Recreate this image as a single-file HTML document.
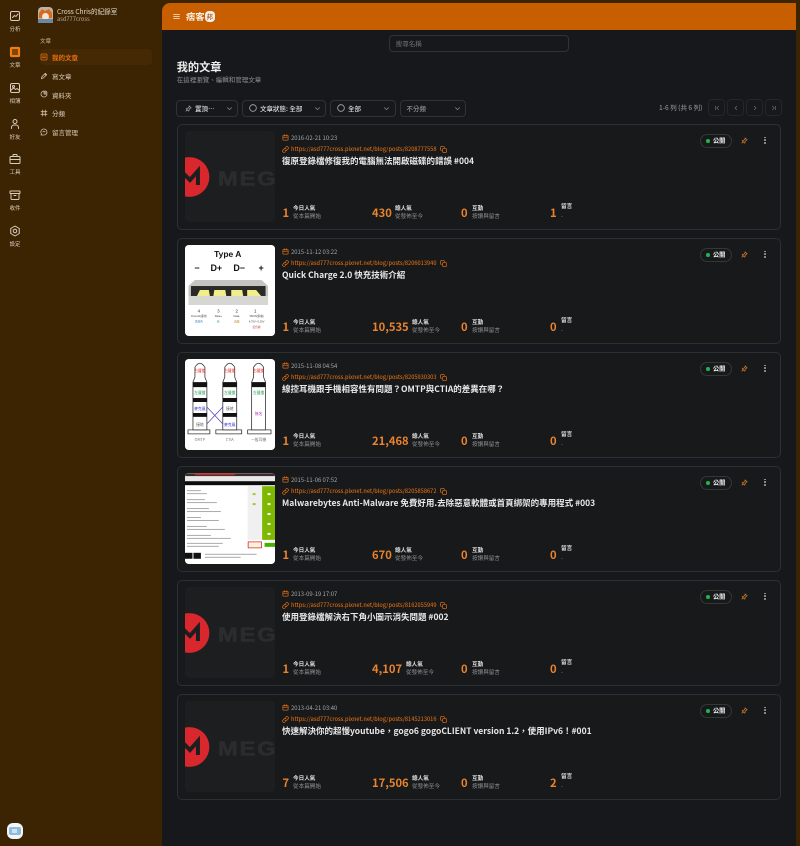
<!DOCTYPE html>
<html lang="zh-Hant"><head><meta charset="utf-8"><title>我的文章</title>
<style>
*{box-sizing:border-box;margin:0;padding:0}
html,body{width:800px;height:846px;overflow:hidden;background:#3c2403;font-family:"Noto Sans CJK TC","Liberation Sans",sans-serif;color:#e4e4e4}
.a{position:absolute;white-space:nowrap}
svg{display:block;fill:none;stroke:currentColor;stroke-linecap:round;stroke-linejoin:round}
.rail{position:absolute;left:0;width:30px;text-align:center;font-size:5.500px;line-height:8px;color:#d8cdbd}
.rail svg{width:12px;height:12px;margin:1px auto 3px}
.rail.on svg{color:#f07c14}
.nav{position:absolute;left:40px;width:112px;height:16px;font-size:6.500px;line-height:16px;color:#d9cdbc;padding-left:12px}
.nav svg{position:absolute;left:0;top:3.500px;width:8px;height:8px;color:#cdbfa9}
.nav.on{background:#452904;color:#e8700f;font-weight:700;border-radius:4px}
.nav.on svg{color:#e8700f}
#main{position:absolute;left:162px;top:3px;width:634px;height:843px;background:#16181b;border-radius:8px 0 0 0;overflow:hidden}
#hd{position:absolute;left:0;top:0;width:634px;height:27px;background:#c75f00}
.flt{position:absolute;top:96.500px;height:17px;border:1px solid #2f3337;border-radius:4px;font-size:6.500px;line-height:15px;font-weight:500;color:#dedede}
.flt span{position:absolute;white-space:nowrap}
.flt svg{position:absolute;top:4px;width:7px;height:7px;color:#8b8d8f}
.pg{position:absolute;top:96px;width:17px;height:17px;border:1px solid #24272a;border-radius:4px;color:#66696c}
.pg svg{width:6px;height:6px;margin:4.500px auto}
.card{position:absolute;left:15px;width:604px;height:106px;border:1px solid #2d3033;border-radius:5px;background:#17191b}
.im{position:absolute;left:6.500px;top:6px;width:90.500px;height:91px;border-radius:4px;overflow:hidden;background:#1c1e20}
.im svg{width:90.500px;height:91px;stroke:none}
.dt{position:absolute;left:104px;top:7px;font-size:5.900px;line-height:11px;color:#a5a6a7;padding-left:9px;white-space:nowrap}
.url{position:absolute;left:104px;top:18.500px;font-size:5.550px;line-height:11px;color:#d66a12;font-weight:500;padding-left:9px;white-space:nowrap}
.ic{position:absolute;left:0;top:2px;width:7px;height:7px;color:#d66a12}
.cp{position:absolute;left:262px;top:20.500px;width:7px;height:7px;color:#d66a12}
.tt{position:absolute;left:104px;top:29px;font-size:8.500px;line-height:15px;font-weight:700;color:#e8e8e8;white-space:nowrap}
.n{position:absolute;top:78.500px;font-size:11.200px;line-height:18px;font-weight:700;color:#e9832d;white-space:nowrap}
.l1{position:absolute;top:79px;font-size:5.600px;line-height:8px;font-weight:700;color:#e3e3e3;white-space:nowrap}
.l2{position:absolute;top:86.500px;font-size:5.600px;line-height:8px;color:#8f9092;white-space:nowrap}
.pub{position:absolute;left:522px;top:8.500px;width:32px;height:14.500px;border:1px solid #2e3a36;border-radius:8px;font-size:6.200px;line-height:12.500px;font-weight:700;color:#eee;padding-left:12px}
.pub i{position:absolute;left:5px;top:4.500px;width:3.500px;height:3.500px;border-radius:50%;background:#22b14c}
.pin{position:absolute;left:562.500px;top:12px;width:7px;height:7px;color:#d97a28}
.more{position:absolute;left:586px;top:11.500px;width:3px;height:9px}
.more b{display:block;width:1.800px;height:1.800px;background:#a0a0a0;border-radius:50%;margin:0 0 1.200px}
</style></head><body>
<svg width="0" height="0" style="position:absolute"><defs>
<symbol id="cal" viewBox="0 0 24 24"><rect x="3" y="5" width="18" height="16" rx="2" stroke-width="2.600"/><path d="M8 2v5M16 2v5M3 11h18" stroke-width="2.600"/></symbol>
<symbol id="lnk" viewBox="0 0 24 24"><path d="M10 14a5 5 0 0 0 7 0l4-4a5 5 0 0 0-7-7l-2 2M14 10a5 5 0 0 0-7 0l-4 4a5 5 0 0 0 7 7l2-2" stroke-width="2.600"/></symbol>
<symbol id="cpy" viewBox="0 0 24 24"><rect x="9" y="9" width="13" height="13" rx="2" stroke-width="2.600"/><path d="M5 15H4a2 2 0 0 1-2-2V4a2 2 0 0 1 2-2h9a2 2 0 0 1 2 2v1" stroke-width="2.600"/></symbol>
<symbol id="pin" viewBox="0 0 24 24"><path d="M14 3l7 7-3 1-4 4v4l-2 2-8-8 2-2h4l4-4zM8 16l-5 5" stroke-width="2.600"/></symbol>
<symbol id="chev" viewBox="0 0 24 24"><path d="M5 9l7 7 7-7" stroke-width="2.400"/></symbol>
<symbol id="mega" viewBox="0 0 91 91"><rect width="91" height="91" fill="#1c1e20"/><circle cx="4.500" cy="46" r="20" fill="#d9272e"/><path d="M-4 54V40L5 49 13 40V54" fill="none" stroke="#1c1e20" stroke-width="4" stroke-linecap="butt" stroke-linejoin="miter"/><text transform="translate(33 54.500) scale(1.200 1)" font-family="Liberation Sans" font-weight="700" font-size="20" letter-spacing="1.500" fill="#2a2c2e" stroke="#2a2c2e" stroke-width=".6">MEGA</text></symbol>
</defs></svg>

<div class="rail" style="top:9px"><svg viewBox="0 0 24 24" stroke-width="2"><rect x="3" y="3" width="18" height="18" rx="3"/><path d="M7 15l4-4 3 2 4-5"/></svg>分析</div>
<div class="rail on" style="top:45px"><svg viewBox="0 0 24 24" stroke-width="2.400"><rect x="3" y="3" width="18" height="18" rx="2" fill="#f07c14"/><path d="M7 8h10M7 12h10M7 16h10" stroke="#3c2403"/></svg>文章</div>
<div class="rail" style="top:81px"><svg viewBox="0 0 24 24" stroke-width="2"><rect x="3" y="3" width="18" height="18" rx="3"/><circle cx="9" cy="9" r="2"/><path d="M3 17l6-5 4 3 3-2 5 4"/></svg>相簿</div>
<div class="rail" style="top:117px"><svg viewBox="0 0 24 24" stroke-width="2"><circle cx="12" cy="7" r="4"/><path d="M5 21v-2a5 5 0 0 1 5-5h4a5 5 0 0 1 5 5v2"/></svg>好友</div>
<div class="rail" style="top:152px"><svg viewBox="0 0 24 24" stroke-width="2"><rect x="2" y="7" width="20" height="14" rx="2"/><path d="M8 7V4a1 1 0 0 1 1-1h6a1 1 0 0 1 1 1v3M2 13h20"/></svg>工具</div>
<div class="rail" style="top:188px"><svg viewBox="0 0 24 24" stroke-width="2"><rect x="2" y="4" width="20" height="5" rx="1"/><path d="M4 9v10a2 2 0 0 0 2 2h12a2 2 0 0 0 2-2V9M10 13h4"/></svg>收件</div>
<div class="rail" style="top:224px"><svg viewBox="0 0 24 24" stroke-width="2"><path d="M12 2l8.500 5v10L12 22l-8.500-5V7z"/><circle cx="12" cy="12" r="3.500"/></svg>設定</div>

<svg class="a" style="left:38px;top:7px;width:15px;height:16px;stroke:none" viewBox="0 0 15 16"><rect width="15" height="16" rx="4" fill="#b9b4a8"/><path d="M1 6l3-4 3 2 4-2 3 4v5H1z" fill="#d9691b"/><circle cx="7.500" cy="9.500" r="3.500" fill="#f1e6d6"/><rect x="0" y="12" width="15" height="4" fill="#6d87a0"/></svg>
<div class="a" style="left:57px;top:6px;font-size:6.600px;line-height:10px;color:#e2d8c9">Cross Chris的紀錄室</div>
<div class="a" style="left:57px;top:15px;font-size:5.700px;line-height:8px;color:#b7a994">asd777cross</div>
<div class="a" style="left:40px;top:37px;font-size:5.500px;line-height:8px;color:#cbbda8">文章</div>

<div class="nav on" style="top:49px"><svg viewBox="0 0 24 24" stroke-width="2.400"><rect x="3" y="3" width="18" height="18" rx="3"/><path d="M7 9h10M7 14h10"/></svg>我的文章</div>
<div class="nav" style="top:68px"><svg viewBox="0 0 24 24" stroke-width="2.400"><path d="M4 20l2-6L16 4l4 4-10 10z"/><path d="M14 6l4 4"/></svg>寫文章</div>
<div class="nav" style="top:86.500px"><svg viewBox="0 0 24 24" stroke-width="2.400"><path d="M12 3a9 9 0 1 0 9 9h-9z"/><path d="M15 3a6 6 0 0 1 6 6h-6z"/></svg>資料夾</div>
<div class="nav" style="top:105px"><svg viewBox="0 0 24 24" stroke-width="2.400"><path d="M8 3v18M16 3v18M3 8h18M3 16h18"/></svg>分類</div>
<div class="nav" style="top:124px"><svg viewBox="0 0 24 24" stroke-width="2.400"><path d="M12 3a9 9 0 0 1 0 18H3l2-3a9 9 0 0 1 7-15z"/><path d="M9 11h6"/></svg>留言管理</div>

<svg class="a" style="left:7px;top:823px;width:16px;height:16px;stroke:none" viewBox="0 0 16 16"><rect width="16" height="16" rx="6" fill="#f2f6f8"/><rect x="2" y="4" width="12" height="8" rx="2" fill="#8fbcd8"/><rect x="5" y="6" width="5" height="4" fill="#cfe3ef"/></svg>

<div id="main">
  <div id="hd">
    <svg class="a" style="left:11px;top:10px;width:7px;height:7px;color:#f3d9bd" viewBox="0 0 24 24" stroke-width="3"><path d="M2 5h20M2 12h20M2 19h20"/></svg>
    <div class="a" style="left:24px;top:6px;font-size:9.300px;line-height:15px;font-weight:700;color:#fbeee0">痞客</div>
    <div class="a" style="left:43px;top:8px;width:9.500px;height:11px;background:#f6efe7;border-radius:4px;color:#a85a20;font-size:6.500px;line-height:11px;font-weight:500;text-align:center">邦</div>
  </div>
  <div class="a" style="left:226.700px;top:32px;width:180px;height:17px;border:1px solid #2f3337;border-radius:4px;padding-left:6px;font-size:6.500px;line-height:15px;color:#6f7173">搜尋名稱</div>
  <div class="a" style="left:14.700px;top:55.500px;font-size:11.200px;line-height:16px;font-weight:700;color:#eee">我的文章</div>
  <div class="a" style="left:14.700px;top:72px;font-size:6.500px;line-height:9px;color:#8c8e90">在這裡瀏覽、編輯和管理文章</div>

  <div class="flt" style="left:14px;width:61.500px"><svg viewBox="0 0 24 24" style="left:8px;top:4px;color:#a0a0a0"><use href="#pin"/></svg><span style="left:18px">置頂⋯</span><svg viewBox="0 0 24 24" style="left:49px"><use href="#chev"/></svg></div>
  <div class="flt" style="left:80px;width:84px"><svg viewBox="0 0 24 24" style="left:6px;top:3px;width:8px;height:8px;color:#b0b0b0" stroke-width="2.400"><circle cx="12" cy="12" r="10"/></svg><span style="left:17px">文章狀態: 全部</span><svg viewBox="0 0 24 24" style="left:71px"><use href="#chev"/></svg></div>
  <div class="flt" style="left:168px;width:66px"><svg viewBox="0 0 24 24" style="left:6px;top:3px;width:8px;height:8px;color:#b0b0b0" stroke-width="2.400"><circle cx="12" cy="12" r="10"/></svg><span style="left:17px">全部</span><svg viewBox="0 0 24 24" style="left:52px"><use href="#chev"/></svg></div>
  <div class="flt" style="left:237.500px;width:66px;color:#8f9092"><span style="left:6px">不分類</span><svg viewBox="0 0 24 24" style="left:53px"><use href="#chev"/></svg></div>

  <div class="a" style="left:497px;top:100px;font-size:6.500px;line-height:9px;font-weight:500;color:#8a8c8e">1-6 列 (共 6 列)</div>
  <div class="pg" style="left:546px"><svg viewBox="0 0 24 24" stroke-width="3"><path d="M6 5v14M18 5l-7 7 7 7"/></svg></div>
  <div class="pg" style="left:565px"><svg viewBox="0 0 24 24" stroke-width="3"><path d="M15 5l-7 7 7 7"/></svg></div>
  <div class="pg" style="left:584px"><svg viewBox="0 0 24 24" stroke-width="3"><path d="M9 5l7 7-7 7"/></svg></div>
  <div class="pg" style="left:603px"><svg viewBox="0 0 24 24" stroke-width="3"><path d="M18 5v14M6 5l7 7-7 7"/></svg></div>

  <!-- card 1 -->
  <div class="card" style="top:121px">
    <div class="im"><svg viewBox="0 0 91 91"><use href="#mega"/></svg></div>
    <div class="dt"><svg class="ic" viewBox="0 0 24 24"><use href="#cal"/></svg>2016-02-21 10:23</div>
    <div class="url"><svg class="ic" viewBox="0 0 24 24"><use href="#lnk"/></svg>https://asd777cross.pixnet.net/blog/posts/8208777558</div>
    <svg class="cp" viewBox="0 0 24 24"><use href="#cpy"/></svg>
    <div class="tt">復原登錄檔修復我的電腦無法開啟磁碟的錯誤 #004</div>
    <div class="n" style="left:104.500px">1</div><div class="l1" style="left:115px">今日人氣</div><div class="l2" style="left:115px">從本篇開始</div>
    <div class="n" style="left:194px">430</div><div class="l1" style="left:217px">總人氣</div><div class="l2" style="left:217px">從發佈至今</div>
    <div class="n" style="left:283px">0</div><div class="l1" style="left:294px">互動</div><div class="l2" style="left:294px">按讚與留言</div>
    <div class="n" style="left:372px">1</div><div class="l1" style="left:383px;top:77px">留言</div><div class="l2" style="left:383px">-</div>
    <div class="pub"><i></i>公開</div><svg class="pin" viewBox="0 0 24 24"><use href="#pin"/></svg><div class="more"><b></b><b></b><b></b></div>
  </div>

  <!-- card 2 -->
  <div class="card" style="top:235px">
    <div class="im" style="background:#fff"><svg viewBox="0 0 91 91">
      <rect width="91" height="91" fill="#fff"/>
      <text x="43" y="12" text-anchor="middle" font-family="Liberation Sans" font-weight="700" font-size="8.500" fill="#111">Type A</text>
      <g font-family="Liberation Sans" font-weight="700" font-size="9" fill="#111" text-anchor="middle"><text x="12" y="26">−</text><text x="31.500" y="26">D+</text><text x="54.500" y="26">D−</text><text x="76.500" y="26">+</text></g>
      <path d="M3.500 41L10 35h67l6.500 6v19h-80z" fill="#c4c4c1"/><rect x="3.500" y="51" width="80" height="9" fill="#d6d6d3"/><rect x="6" y="41" width="75" height="10" fill="#2a2a28"/>
      <path d="M12 51l3-6h9l1 6zM28.500 51l1-6h11l1 6zM46.500 51l0-6h11l1 6zM62.500 51l0-6h9l5 6z" fill="#f2ee8c"/>
      <g font-family="Liberation Sans" font-size="4.500" fill="#333" text-anchor="middle"><text x="14" y="67.500">4</text><text x="33.500" y="67.500">3</text><text x="52" y="67.500">2</text><text x="70.500" y="67.500">1</text></g>
      <g font-family="Liberation Sans,Noto Sans CJK TC" font-size="2.700" fill="#444" text-anchor="middle"><text x="14" y="72">Ground(接地)</text><text x="33.500" y="72">Data+</text><text x="52" y="72">Data-</text><text x="72" y="72">VBUS(供電)</text><text x="14" y="77.500" fill="#2a7fc0">黑綠色</text><text x="33.500" y="77.500" fill="#3a9">綠</text><text x="52" y="77.500" fill="#a80">白線</text><text x="72" y="77.500">4.75V~5.25V</text><text x="72" y="83" fill="#c33">紅色線</text></g>
    </svg></div>
    <div class="dt"><svg class="ic" viewBox="0 0 24 24"><use href="#cal"/></svg>2015-11-12 03:22</div>
    <div class="url"><svg class="ic" viewBox="0 0 24 24"><use href="#lnk"/></svg>https://asd777cross.pixnet.net/blog/posts/8206013940</div>
    <svg class="cp" viewBox="0 0 24 24"><use href="#cpy"/></svg>
    <div class="tt">Quick Charge 2.0 快充技術介紹</div>
    <div class="n" style="left:104.500px">1</div><div class="l1" style="left:115px">今日人氣</div><div class="l2" style="left:115px">從本篇開始</div>
    <div class="n" style="left:194px">10,535</div><div class="l1" style="left:234px">總人氣</div><div class="l2" style="left:234px">從發佈至今</div>
    <div class="n" style="left:283px">0</div><div class="l1" style="left:294px">互動</div><div class="l2" style="left:294px">按讚與留言</div>
    <div class="n" style="left:372px">0</div><div class="l1" style="left:383px;top:77px">留言</div><div class="l2" style="left:383px">-</div>
    <div class="pub"><i></i>公開</div><svg class="pin" viewBox="0 0 24 24"><use href="#pin"/></svg><div class="more"><b></b><b></b><b></b></div>
  </div>

  <!-- card 3 -->
  <div class="card" style="top:349px">
    <div class="im" style="background:#fff"><svg viewBox="0 0 91 91">
      <rect width="91" height="91" fill="#fff"/>
      <g fill="none" stroke="#333" stroke-width=".8">
        <path d="M8 71V23L10 18V8Q15 0 20 8V18L22 23V71z"/><path d="M38 71V23L40 18V8Q45 0 50 8V18L52 23V71z"/><path d="M67 71V23L69 18V8Q74 0 79 8V18L81 23V71z"/>
        <path d="M3 71h22v4H3zM31 71h26v4H31zM63 71h23.500v4H63z"/>
      </g>
      <path d="M8 23h14v5H8zM8 39h14v4H8zM8 54h14v4H8zM38 23h14v5H38zM38 39h14v4H38zM38 54h14v4H38zM67 23h14v5H67z" fill="#111"/>
      <path d="M22 65L38 48M22 48L38 65" stroke="#4a3cc0" stroke-width=".7" fill="none"/>
      <g font-family="Noto Sans CJK TC" font-size="3.800" text-anchor="middle">
        <text x="15" y="13" fill="#d22">右聲道</text><text x="45" y="13" fill="#d22">右聲道</text><text x="74" y="13" fill="#d22">右聲道</text>
        <text x="15" y="35" fill="#1a9a40">左聲道</text><text x="45" y="35" fill="#1a9a40">左聲道</text><text x="74" y="35" fill="#1a9a40">左聲道</text>
        <text x="15" y="51" fill="#33c">麥克風</text><text x="45" y="51" fill="#555">接地</text><text x="74" y="56" fill="#a3a">無名</text>
        <text x="15" y="67" fill="#555">接地</text><text x="45" y="67" fill="#33c">麥克風</text>
        <text x="15" y="82" fill="#777">OMTP</text><text x="45" y="82" fill="#777">CTIA</text><text x="74" y="82" fill="#777">一般耳機</text>
      </g>
    </svg></div>
    <div class="dt"><svg class="ic" viewBox="0 0 24 24"><use href="#cal"/></svg>2015-11-08 04:54</div>
    <div class="url"><svg class="ic" viewBox="0 0 24 24"><use href="#lnk"/></svg>https://asd777cross.pixnet.net/blog/posts/8205930303</div>
    <svg class="cp" viewBox="0 0 24 24"><use href="#cpy"/></svg>
    <div class="tt">線控耳機跟手機相容性有問題？OMTP與CTIA的差異在哪？</div>
    <div class="n" style="left:104.500px">1</div><div class="l1" style="left:115px">今日人氣</div><div class="l2" style="left:115px">從本篇開始</div>
    <div class="n" style="left:194px">21,468</div><div class="l1" style="left:234px">總人氣</div><div class="l2" style="left:234px">從發佈至今</div>
    <div class="n" style="left:283px">0</div><div class="l1" style="left:294px">互動</div><div class="l2" style="left:294px">按讚與留言</div>
    <div class="n" style="left:372px">0</div><div class="l1" style="left:383px;top:77px">留言</div><div class="l2" style="left:383px">-</div>
    <div class="pub"><i></i>公開</div><svg class="pin" viewBox="0 0 24 24"><use href="#pin"/></svg><div class="more"><b></b><b></b><b></b></div>
  </div>

  <!-- card 4 -->
  <div class="card" style="top:463px">
    <div class="im" style="background:#fff"><svg viewBox="0 0 91 91">
      <rect width="91" height="91" fill="#fff"/><rect width="91" height="3" fill="#3a2c2c"/><rect x="10" y="0" width="40" height="2" fill="#b03030"/>
      <rect y="3" width="91" height="5" fill="#e8e8e8"/><rect y="8" width="91" height="4" fill="#0c0c0c"/>
      <rect x="77.500" y="13" width="13.500" height="54" fill="#7fb800"/><rect x="63" y="13" width="14.500" height="54" fill="#f0f0f0"/>
      <g fill="#aaa"><rect x="2" y="17" width="14" height="1"/><rect x="2" y="20" width="20" height="1"/><rect x="2" y="26" width="18" height="1"/><rect x="2" y="29" width="30" height="1"/><rect x="2" y="35" width="22" height="1"/><rect x="2" y="38" width="34" height="1"/><rect x="2" y="44" width="14" height="1"/><rect x="2" y="47" width="32" height="1"/><rect x="2" y="53" width="20" height="1"/><rect x="2" y="56" width="38" height="1"/><rect x="2" y="62" width="24" height="1"/><rect x="2" y="65" width="44" height="1"/><rect x="2" y="70" width="36" height="1"/><rect x="2" y="73" width="32" height="1"/></g>
      <g fill="#fff"><rect x="83" y="20" width="3" height="2"/><rect x="83" y="30" width="3" height="2"/><rect x="83" y="40" width="3" height="2"/><rect x="83" y="50" width="3" height="2"/><rect x="83" y="60" width="3" height="2"/></g>
      <rect x="68" y="20" width="3" height="2" fill="#9c3"/><rect x="68" y="30" width="3" height="2" fill="#9c3"/>
      <rect x="63.500" y="69" width="13.500" height="6" fill="#fff4d8" stroke="#d23" stroke-width=".8"/><rect x="80" y="70" width="11" height="4" fill="#44b000"/>
      <rect x="0" y="80" width="7.500" height="6" fill="#111"/><rect x="8.500" y="80" width="7.500" height="6" fill="#111"/>
      <rect x="20" y="81" width="52" height="1" fill="#aaa"/><rect x="20" y="84" width="36" height="1" fill="#aaa"/>
    </svg></div>
    <div class="dt"><svg class="ic" viewBox="0 0 24 24"><use href="#cal"/></svg>2015-11-06 07:52</div>
    <div class="url"><svg class="ic" viewBox="0 0 24 24"><use href="#lnk"/></svg>https://asd777cross.pixnet.net/blog/posts/8205858672</div>
    <svg class="cp" viewBox="0 0 24 24"><use href="#cpy"/></svg>
    <div class="tt">Malwarebytes Anti-Malware 免費好用.去除惡意軟體或首頁綁架的專用程式 #003</div>
    <div class="n" style="left:104.500px">1</div><div class="l1" style="left:115px">今日人氣</div><div class="l2" style="left:115px">從本篇開始</div>
    <div class="n" style="left:194px">670</div><div class="l1" style="left:217px">總人氣</div><div class="l2" style="left:217px">從發佈至今</div>
    <div class="n" style="left:283px">0</div><div class="l1" style="left:294px">互動</div><div class="l2" style="left:294px">按讚與留言</div>
    <div class="n" style="left:372px">0</div><div class="l1" style="left:383px;top:77px">留言</div><div class="l2" style="left:383px">-</div>
    <div class="pub"><i></i>公開</div><svg class="pin" viewBox="0 0 24 24"><use href="#pin"/></svg><div class="more"><b></b><b></b><b></b></div>
  </div>

  <!-- card 5 -->
  <div class="card" style="top:577px">
    <div class="im"><svg viewBox="0 0 91 91"><use href="#mega"/></svg></div>
    <div class="dt"><svg class="ic" viewBox="0 0 24 24"><use href="#cal"/></svg>2013-09-19 17:07</div>
    <div class="url"><svg class="ic" viewBox="0 0 24 24"><use href="#lnk"/></svg>https://asd777cross.pixnet.net/blog/posts/8162055949</div>
    <svg class="cp" viewBox="0 0 24 24"><use href="#cpy"/></svg>
    <div class="tt">使用登錄檔解決右下角小圖示消失問題 #002</div>
    <div class="n" style="left:104.500px">1</div><div class="l1" style="left:115px">今日人氣</div><div class="l2" style="left:115px">從本篇開始</div>
    <div class="n" style="left:194px">4,107</div><div class="l1" style="left:228px">總人氣</div><div class="l2" style="left:228px">從發佈至今</div>
    <div class="n" style="left:283px">0</div><div class="l1" style="left:294px">互動</div><div class="l2" style="left:294px">按讚與留言</div>
    <div class="n" style="left:372px">0</div><div class="l1" style="left:383px;top:77px">留言</div><div class="l2" style="left:383px">-</div>
    <div class="pub"><i></i>公開</div><svg class="pin" viewBox="0 0 24 24"><use href="#pin"/></svg><div class="more"><b></b><b></b><b></b></div>
  </div>

  <!-- card 6 -->
  <div class="card" style="top:691px">
    <div class="im"><svg viewBox="0 0 91 91"><use href="#mega"/></svg></div>
    <div class="dt"><svg class="ic" viewBox="0 0 24 24"><use href="#cal"/></svg>2013-04-21 03:40</div>
    <div class="url"><svg class="ic" viewBox="0 0 24 24"><use href="#lnk"/></svg>https://asd777cross.pixnet.net/blog/posts/8145213016</div>
    <svg class="cp" viewBox="0 0 24 24"><use href="#cpy"/></svg>
    <div class="tt">快速解決你的超慢youtube，gogo6 gogoCLIENT version 1.2，使用IPv6！#001</div>
    <div class="n" style="left:104.500px">7</div><div class="l1" style="left:115px">今日人氣</div><div class="l2" style="left:115px">從本篇開始</div>
    <div class="n" style="left:194px">17,506</div><div class="l1" style="left:234px">總人氣</div><div class="l2" style="left:234px">從發佈至今</div>
    <div class="n" style="left:283px">0</div><div class="l1" style="left:294px">互動</div><div class="l2" style="left:294px">按讚與留言</div>
    <div class="n" style="left:372px">2</div><div class="l1" style="left:383px;top:77px">留言</div><div class="l2" style="left:383px">-</div>
    <div class="pub"><i></i>公開</div><svg class="pin" viewBox="0 0 24 24"><use href="#pin"/></svg><div class="more"><b></b><b></b><b></b></div>
  </div>
</div>
</body></html>
